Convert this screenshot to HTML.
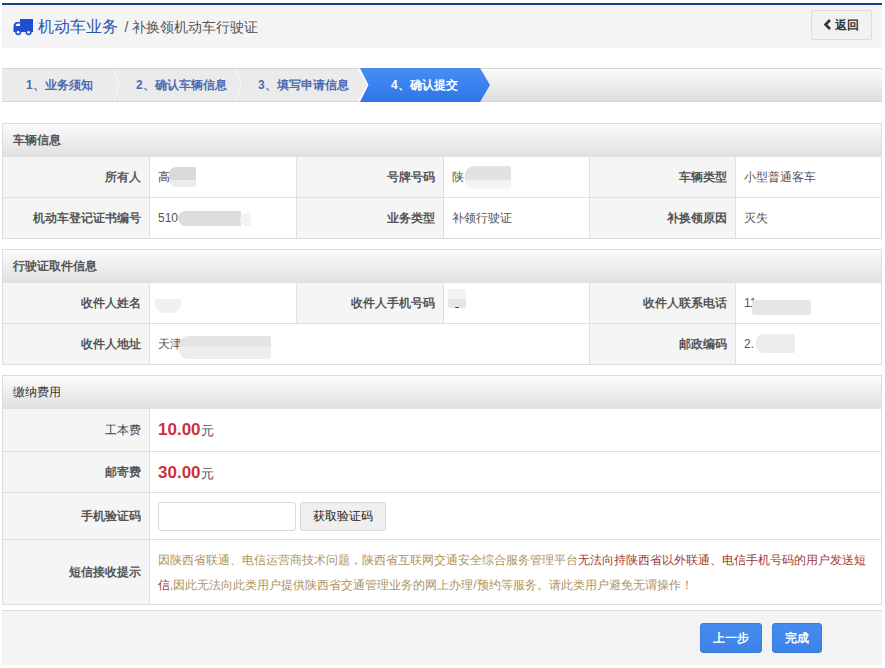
<!DOCTYPE html>
<html><head><meta charset="utf-8">
<style>
*{margin:0;padding:0;box-sizing:border-box}
html,body{width:885px;height:668px;overflow:hidden;background:#fff}
body{font-family:"Liberation Sans",sans-serif;font-size:12px;color:#555;position:relative}
.abs{position:absolute}
#topline{left:2px;top:3px;width:880px;height:2px;background:#1c3f8e}
#hdr{left:2px;top:5px;width:880px;height:43px;background:#f4f4f4}
#truck{left:13px;top:18px}
#ttl{left:38px;top:17px;font-size:16px;color:#2b55ad;line-height:20px;white-space:nowrap}
#ttl span{font-size:14px;color:#555;margin-left:2px}
#back{left:811px;top:10px;width:61px;height:30px;border:1px solid #dcdcdc;border-radius:2px;background:#f1f1f1;font-size:12px;font-weight:bold;color:#333;line-height:28px;text-align:center}
#steps{left:2px;top:68px;width:880px;height:34px;border-top:1px solid #d6d6d6;border-bottom:1px solid #d6d6d6;background:linear-gradient(#fafafa,#dedede)}
#steps .flat{position:absolute;left:0;top:0;width:366px;height:32px;background:#ebebeb}
.st{position:absolute;top:0;height:32px;line-height:32px;font-weight:bold;color:#4d6bb0;font-size:12px;white-space:nowrap}
.sec{position:absolute;left:2px;width:880px;border:1px solid #dcdcdc;background:#fff}
.sh{height:33px;line-height:33px;background:linear-gradient(#fbfbfb,#e1e1e1);padding-left:10px;font-weight:bold;color:#555;font-size:12px;border-bottom:1px solid #e2e2e2}
.row{position:relative;border-top:1px solid #e0e0e0;display:flex}
.row:first-of-type{border-top:none}
.c{position:relative;height:100%;line-height:inherit;white-space:nowrap;overflow:visible}
.l{background:#f5f5f5;text-align:right;padding-right:8px;font-weight:bold;color:#555;border-right:1px solid #e0e0e0}
.v{padding-left:8px;color:#555;border-right:1px solid #e0e0e0}
.v:last-child{border-right:none}
.blob{position:absolute;background:#e3e3e3;border-radius:7px 2px 2px 7px;filter:blur(0.7px)}
.red{color:#cc323b;font-weight:bold;font-size:17px}
.yuan{font-size:13px}
#foot{left:2px;top:610px;width:880px;height:55px;border-top:1px solid #dcdcdc;background:#f3f3f3}
.btn{position:absolute;top:623px;height:30px;background:linear-gradient(#468cf0,#3c83e8);border:1px solid #3a7ada;border-radius:3px;color:#fff;font-weight:bold;font-size:12px;line-height:28px;text-align:center}
i{font-style:normal;display:inline-block;width:1em;text-align:center}
.nocjk i{position:relative;-webkit-text-fill-color:transparent}
.nocjk i::before{content:"";position:absolute;left:0.07em;width:0.86em;height:0.86em;top:50%;margin-top:-0.45em;background:currentColor;opacity:.41}
.nocjk .l i::before,.nocjk .st i::before,.nocjk .btn i::before,.nocjk b i::before{opacity:.6}
.nocjk #ttl i::before{opacity:.34}.nocjk #ttl span i::before{opacity:.38}.nocjk .sh i::before{opacity:.68}.nocjk #back i::before{opacity:.66}
</style></head><body>
<div id="topline" class="abs"></div>
<div id="hdr" class="abs"></div>
<svg id="truck" class="abs" width="22" height="18" viewBox="0 0 22 18">
  <path d="M7 1h13v13H7z" fill="#1f4fd0"/>
  <path d="M0.5 14V9Q0.5 4 4.5 4H8v10z" fill="#1f4fd0"/>
  <path d="M2.6 8Q3 5.6 5.5 5.6H7V8z" fill="#fff"/>
  <circle cx="5.2" cy="14.3" r="3" fill="#1f4fd0"/><circle cx="5.2" cy="14.3" r="1.4" fill="#fff"/>
  <circle cx="15.6" cy="14.3" r="3" fill="#1f4fd0"/><circle cx="15.6" cy="14.3" r="1.4" fill="#fff"/>
</svg>
<div id="ttl" class="abs"><i>机</i><i>动</i><i>车</i><i>业</i><i>务</i> <span>/ <i>补</i><i>换</i><i>领</i><i>机</i><i>动</i><i>车</i><i>行</i><i>驶</i><i>证</i></span></div>
<div id="back" class="abs"><span style="margin-left:10px"><i>返</i><i>回</i></span></div>
<svg class="abs" style="left:822px;top:18px" width="12" height="13" viewBox="0 0 12 13"><polyline points="8,2 3.5,6.5 8,11" fill="none" stroke="#333" stroke-width="2.6"/></svg>

<div id="steps" class="abs">
  <div class="flat"></div>
  <svg class="abs" style="left:0;top:-1px" width="880" height="34">
    <defs><linearGradient id="bg4" x1="0" y1="0" x2="0" y2="1">
      <stop offset="0" stop-color="#5286d6"/><stop offset="0.04" stop-color="#468cf6"/><stop offset="0.96" stop-color="#2f77e7"/><stop offset="1" stop-color="#3f6fc0"/></linearGradient></defs>
    <polyline points="111.5,1 117,17 112.5,33" fill="none" stroke="#f7f7f7" stroke-width="1.3" opacity="0.8"/>
    <polyline points="113,1 118.5,17 114,33" fill="none" stroke="#e2e2e2" stroke-width="0.8" opacity="0.5"/>
    <polyline points="233.5,1 239,17 234.5,33" fill="none" stroke="#f7f7f7" stroke-width="1.3" opacity="0.8"/>
    <polyline points="235,1 240.5,17 236,33" fill="none" stroke="#e2e2e2" stroke-width="0.8" opacity="0.5"/>
    <polyline points="357,1 366,17 357,33" fill="none" stroke="#fff" stroke-width="1.6"/>
    <polygon points="358,0 478,0 488,17 478,34 358,34 366.5,17" fill="url(#bg4)"/>
  </svg>
  <div class="st" style="left:24px">1<i>、</i><i>业</i><i>务</i><i>须</i><i>知</i></div>
  <div class="st" style="left:134px">2<i>、</i><i>确</i><i>认</i><i>车</i><i>辆</i><i>信</i><i>息</i></div>
  <div class="st" style="left:256px">3<i>、</i><i>填</i><i>写</i><i>申</i><i>请</i><i>信</i><i>息</i></div>
  <div class="st" style="left:389px;color:#fff">4<i>、</i><i>确</i><i>认</i><i>提</i><i>交</i></div>
</div>

<!-- section 1 -->
<div class="sec" style="top:123px;height:116px">
  <div class="sh"><i>车</i><i>辆</i><i>信</i><i>息</i></div>
  <div class="row" style="height:40px;line-height:40px;border-top:none">
    <div class="c l" style="width:147px"><i>所</i><i>有</i><i>人</i></div>
    <div class="c v" style="width:147px"><i>高</i><div class="blob" style="left:19px;top:10px;width:27px;height:20px;background:linear-gradient(#d9d9d9 0,#d9d9d9 64%,#ececec 64%,#ececec 100%)"></div></div>
    <div class="c l" style="width:147px"><i>号</i><i>牌</i><i>号</i><i>码</i></div>
    <div class="c v" style="width:146px"><i>陕</i><div class="blob" style="left:21px;top:9px;width:46px;height:23px;border-radius:9px 2px 2px 9px;background:linear-gradient(#e2e2e2 0,#e2e2e2 60%,#f1f1f1 60%,#f6f6f6 100%)"></div></div>
    <div class="c l" style="width:146px"><i>车</i><i>辆</i><i>类</i><i>型</i></div>
    <div class="c v" style="width:145px"><i>小</i><i>型</i><i>普</i><i>通</i><i>客</i><i>车</i></div>
  </div>
  <div class="row" style="height:41px;line-height:40px">
    <div class="c l" style="width:147px"><i>机</i><i>动</i><i>车</i><i>登</i><i>记</i><i>证</i><i>书</i><i>编</i><i>号</i></div>
    <div class="c v" style="width:147px">510<div class="blob" style="left:28px;top:13px;width:63px;height:15px;background:#dcdcdc;border-radius:8px 1px 1px 8px"></div><div class="blob" style="left:90px;top:15px;width:11px;height:13px;background:#f3f3f3"></div></div>
    <div class="c l" style="width:147px"><i>业</i><i>务</i><i>类</i><i>型</i></div>
    <div class="c v" style="width:146px"><i>补</i><i>领</i><i>行</i><i>驶</i><i>证</i></div>
    <div class="c l" style="width:146px"><i>补</i><i>换</i><i>领</i><i>原</i><i>因</i></div>
    <div class="c v" style="width:145px"><i>灭</i><i>失</i></div>
  </div>
</div>

<!-- section 2 -->
<div class="sec" style="top:249px;height:116px">
  <div class="sh"><i>行</i><i>驶</i><i>证</i><i>取</i><i>件</i><i>信</i><i>息</i></div>
  <div class="row" style="height:40px;line-height:40px;border-top:none">
    <div class="c l" style="width:147px"><i>收</i><i>件</i><i>人</i><i>姓</i><i>名</i></div>
    <div class="c v" style="width:147px"><div class="blob" style="left:5px;top:16px;width:26px;height:14px;background:#f0f0f0;border-radius:2px 2px 9px 9px"></div></div>
    <div class="c l" style="width:147px"><i>收</i><i>件</i><i>人</i><i>手</i><i>机</i><i>号</i><i>码</i></div>
    <div class="c v" style="width:146px"><div class="blob" style="left:4px;top:6px;width:18px;height:19px;background:linear-gradient(#f3f3f3 0,#f3f3f3 55%,#e6e6e6 55%,#e6e6e6 100%);border-radius:2px"></div><div class="abs" style="left:11px;top:23.5px;width:4px;height:1.5px;background:#444;border-radius:1px"></div></div>
    <div class="c l" style="width:146px"><i>收</i><i>件</i><i>人</i><i>联</i><i>系</i><i>电</i><i>话</i></div>
    <div class="c v" style="width:145px">11<div class="blob" style="left:16px;top:17px;width:59px;height:15px;background:#e6e6e6;border-radius:3px"></div></div>
  </div>
  <div class="row" style="height:41px;line-height:40px">
    <div class="c l" style="width:147px"><i>收</i><i>件</i><i>人</i><i>地</i><i>址</i></div>
    <div class="c v" style="width:440px"><i>天</i><i>津</i><div class="blob" style="left:29px;top:12px;width:92px;height:23px;background:linear-gradient(#e4e4e4 0,#e4e4e4 50%,#ededed 50%,#ededed 100%);border-radius:9px 2px 4px 9px"></div></div>
    <div class="c l" style="width:146px"><i>邮</i><i>政</i><i>编</i><i>码</i></div>
    <div class="c v" style="width:145px">2.<div class="blob" style="left:20px;top:10px;width:39px;height:19px;background:#ececec;border-radius:8px 2px 2px 8px"></div></div>
  </div>
</div>

<!-- section 3 -->
<div class="sec" style="top:375px;height:230px">
  <div class="sh" style="font-weight:500;color:#333"><i>缴</i><i>纳</i><i>费</i><i>用</i></div>
  <div class="row" style="height:42px;line-height:42px;border-top:none">
    <div class="c l" style="width:147px;font-weight:500;color:#444"><i>工</i><i>本</i><i>费</i></div>
    <div class="c v" style="width:731px;border-right:none"><span class="red">10.00</span><span class="yuan"><i>元</i></span></div>
  </div>
  <div class="row" style="height:41px;line-height:41px">
    <div class="c l" style="width:147px"><i>邮</i><i>寄</i><i>费</i></div>
    <div class="c v" style="width:731px;border-right:none"><span class="red">30.00</span><span class="yuan"><i>元</i></span></div>
  </div>
  <div class="row" style="height:47px;line-height:46px">
    <div class="c l" style="width:147px"><i>手</i><i>机</i><i>验</i><i>证</i><i>码</i></div>
    <div class="c v" style="width:731px;border-right:none">
      <div class="abs" style="left:8px;top:9px;width:138px;height:29px;border:1px solid #d8d8d8;border-radius:3px;background:#fff"></div>
      <div class="abs" style="left:150px;top:9px;width:86px;height:29px;border:1px solid #d8d8d8;border-radius:3px;background:#efefef;color:#222;font-weight:500;line-height:27px;text-align:center"><i>获</i><i>取</i><i>验</i><i>证</i><i>码</i></div>
    </div>
  </div>
  <div class="row" style="height:65px;line-height:64px">
    <div class="c l" style="width:147px"><i>短</i><i>信</i><i>接</i><i>收</i><i>提</i><i>示</i></div>
    <div class="c v" style="width:731px;border-right:none;white-space:normal;line-height:25px;padding:8px 8px 0 8px;color:#ad935f"><i>因</i><i>陕</i><i>西</i><i>省</i><i>联</i><i>通</i><i>、</i><i>电</i><i>信</i><i>运</i><i>营</i><i>商</i><i>技</i><i>术</i><i>问</i><i>题</i><i>，</i><i>陕</i><i>西</i><i>省</i><i>互</i><i>联</i><i>网</i><i>交</i><i>通</i><i>安</i><i>全</i><i>综</i><i>合</i><i>服</i><i>务</i><i>管</i><i>理</i><i>平</i><i>台</i><span style="color:#a03a3a"><i>无</i><i>法</i><i>向</i><i>持</i><i>陕</i><i>西</i><i>省</i><i>以</i><i>外</i><i>联</i><i>通</i><i>、</i><i>电</i><i>信</i><i>手</i><i>机</i><i>号</i><i>码</i><i>的</i><i>用</i><i>户</i><i>发</i><i>送</i><i>短</i><i>信</i></span>,<i>因</i><i>此</i><i>无</i><i>法</i><i>向</i><i>此</i><i>类</i><i>用</i><i>户</i><i>提</i><i>供</i><i>陕</i><i>西</i><i>省</i><i>交</i><i>通</i><i>管</i><i>理</i><i>业</i><i>务</i><i>的</i><i>网</i><i>上</i><i>办</i><i>理</i>/<i>预</i><i>约</i><i>等</i><i>服</i><i>务</i><i>。</i><i>请</i><i>此</i><i>类</i><i>用</i><i>户</i><i>避</i><i>免</i><i>无</i><i>谓</i><i>操</i><i>作</i><i>！</i></div>
  </div>
</div>

<div id="foot" class="abs"></div>
<div class="btn" style="left:700px;width:62px"><i>上</i><i>一</i><i>步</i></div>
<div class="btn" style="left:772px;width:50px"><i>完</i><i>成</i></div>
<script>(function(){var t=document.createElement('span');t.style.cssText='position:absolute;visibility:hidden;font:100px "Liberation Sans",sans-serif;white-space:nowrap';t.textContent='\u673a\u673a\u673a\u673a';document.body.appendChild(t);var w=t.getBoundingClientRect().width;document.body.removeChild(t);if(w<360)document.documentElement.className+=' nocjk';})();</script></body></html>
